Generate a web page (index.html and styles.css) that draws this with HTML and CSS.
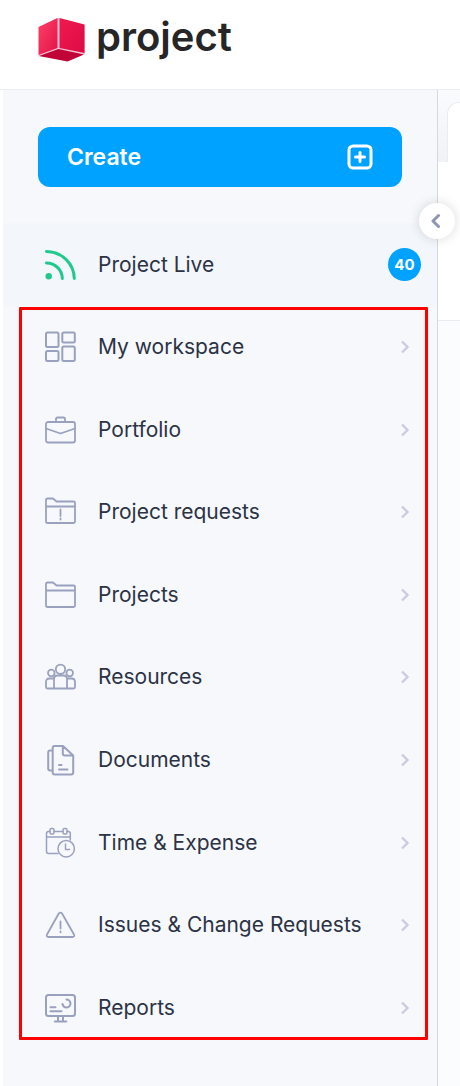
FILE: index.html
```
<!DOCTYPE html>
<html lang="en">
<head>
    <meta charset="UTF-8">
    <meta name="viewport" content="width=device-width, initial-scale=1.0">
    <title>Project</title>
    <link rel="stylesheet" href="styles.css">
</head>
<body>
    <header class="header">
        <a class="logo" href="#">
            <svg class="logo-cube" width="48" height="44" viewBox="0 0 48 44">
                <defs>
                    <linearGradient id="cubeLeft" x1="0" y1="0" x2="1" y2="1">
                        <stop offset="0" stop-color="#ff4166"/>
                        <stop offset="1" stop-color="#e0134a"/>
                    </linearGradient>
                    <linearGradient id="cubeRight" x1="0" y1="0" x2="1" y2="1">
                        <stop offset="0" stop-color="#f01a4e"/>
                        <stop offset="1" stop-color="#dd0a45"/>
                    </linearGradient>
                </defs>
                <path d="M1 9 20 0 47 7V36L30 43 1 38Z" fill="#f3c3d3"/>
                <path d="M0.500 9 19.500 0V30L0.500 37Z" fill="url(#cubeLeft)"/>
                <path d="M21.500 0 46.500 6.500V35L21.500 30Z" fill="url(#cubeRight)"/>
                <path d="M1 38 20.500 31 46 36.500 29.500 43.500Z" fill="#c00438"/>
            </svg>
            <span class="logo-text">project</span>
        </a>
    </header>

    <div class="page">
        <aside class="sidebar">
            <button class="create" type="button">
                <span>Create</span>
                <svg width="26" height="26" viewBox="0 0 26 26" fill="none" stroke="#fff" stroke-width="3" stroke-linecap="round">
                    <rect x="2" y="2" width="22" height="22" rx="4"/>
                    <path d="M13 8.500v9M8.500 13h9"/>
                </svg>
            </button>

            <nav>
                <a class="item live" href="#">
                    <svg class="icon" viewBox="0 0 32 32">
                        <path d="M2.500 2.500A28 27.500 0 0 1 30.300 29.500M2.500 14A16 15.500 0 0 1 18.300 29.500"/>
                        <circle class="dot" cx="4.700" cy="27.300" r="3.200"/>
                    </svg>
                    <span class="label">Project Live</span>
                    <span class="badge">40</span>
                </a>

                <ul class="menu">
                    <li><a class="item" href="#">
                        <svg class="icon bold" viewBox="0 0 32 32"><rect x="2" y="1.500" width="12.500" height="14.500" rx="1.500"/><rect x="18.300" y="1.500" width="12.500" height="10" rx="1.500"/><rect x="2" y="20" width="12.500" height="10" rx="1.500"/><rect x="18.300" y="15.500" width="12.500" height="14.500" rx="1.500"/></svg>
                        <span class="label">My workspace</span>
                        <svg class="arrow" viewBox="0 0 10 14"><path d="M2 1.500 7.500 7 2 12.500"/></svg>
                    </a></li>
                    <li><a class="item" href="#">
                        <svg class="icon" viewBox="0 0 32 32"><rect x="2" y="8" width="29" height="20.500" rx="2"/><path d="M12 8V5q0-1.500 1.500-1.500h6Q21 3.500 21 5v3M2 14.500l14.500 5 14.500-5"/></svg>
                        <span class="label">Portfolio</span>
                        <svg class="arrow" viewBox="0 0 10 14"><path d="M2 1.500 7.500 7 2 12.500"/></svg>
                    </a></li>
                    <li><a class="item" href="#">
                        <svg class="icon" viewBox="0 0 32 32"><path d="M2 25.500V4Q2 2.500 3.500 2.500H9l3.500 3H29.500Q31 5.500 31 7v18.500Q31 27 29.500 27h-26Q2 27 2 25.500ZM2 10.500h29M16.500 13.500v6.500M16.500 22.500v1"/></svg>
                        <span class="label">Project requests</span>
                        <svg class="arrow" viewBox="0 0 10 14"><path d="M2 1.500 7.500 7 2 12.500"/></svg>
                    </a></li>
                    <li><a class="item" href="#">
                        <svg class="icon" viewBox="0 0 32 32"><path d="M2 26.500V5Q2 3.500 3.500 3.500H9l3.500 3H29.500Q31 6.500 31 8v18.500Q31 28 29.500 28h-26Q2 28 2 26.500ZM2 11.500h29"/></svg>
                        <span class="label">Projects</span>
                        <svg class="arrow" viewBox="0 0 10 14"><path d="M2 1.500 7.500 7 2 12.500"/></svg>
                    </a></li>
                    <li><a class="item" href="#">
                        <svg class="icon" viewBox="0 0 32 32"><circle cx="16.500" cy="8.300" r="4.700"/><circle cx="7.300" cy="12" r="3.300"/><circle cx="25.700" cy="12" r="3.300"/><path d="M10 27.500V18q0-3.500 3.500-3.500h6Q23 14.500 23 18v9.500M10 17.500H5.500Q2 17.500 2 21v5q0 1.500 1.500 1.500h26Q31 27.500 31 26v-5q0-3.500-3.500-3.500H23"/></svg>
                        <span class="label">Resources</span>
                        <svg class="arrow" viewBox="0 0 10 14"><path d="M2 1.500 7.500 7 2 12.500"/></svg>
                    </a></li>
                    <li><a class="item" href="#">
                        <svg class="icon bold" viewBox="0 0 32 32"><path d="M19 2h-8.500Q8.700 2 8.700 4v24.500q0 2 2 2h16.500q2 0 2-2V11.500ZM18.800 2v7.500q0 2 2 2h8.400M8.700 6.500H6q-1.800 0-1.800 2V24.500q0 2 1.800 2h2.700M15 21h2.500M15 25.500h8.500"/></svg>
                        <span class="label">Documents</span>
                        <svg class="arrow" viewBox="0 0 10 14"><path d="M2 1.500 7.500 7 2 12.500"/></svg>
                    </a></li>
                    <li><a class="item" href="#">
                        <svg class="icon thin" viewBox="0 0 32 32"><path d="M14 26.500H4.500Q2.500 26.500 2.500 24.500V6.500q0-2 2-2H6M10 4.500h9M23 4.500h1.300q2 0 2 2V13M2.500 10h23.800"/><rect x="6" y="1.500" width="4" height="5.500" rx="1.500"/><rect x="19" y="1.500" width="4" height="5.500" rx="1.500"/><circle cx="22.200" cy="21.700" r="8.200"/><path d="M21.500 17v5.500h4"/></svg>
                        <span class="label">Time &amp; Expense</span>
                        <svg class="arrow" viewBox="0 0 10 14"><path d="M2 1.500 7.500 7 2 12.500"/></svg>
                    </a></li>
                    <li><a class="item" href="#">
                        <svg class="icon" viewBox="0 0 32 32"><path d="M14.600 4.800Q16.400 2.500 18.200 4.800L30 25.500Q31 28 28.500 28h-24Q2 28 3 25.500ZM16.500 12.500v7M16.500 22.500v.8"/></svg>
                        <span class="label">Issues &amp; Change Requests</span>
                        <svg class="arrow" viewBox="0 0 10 14"><path d="M2 1.500 7.500 7 2 12.500"/></svg>
                    </a></li>
                    <li><a class="item" href="#">
                        <svg class="icon bold" viewBox="0 0 32 32"><rect x="2" y="3" width="29" height="21" rx="2.500"/><path d="M6.500 15.200h5M6.500 19.200h11M22.500 7.500a4 4 0 1 1-4 4.500M14 24.500v4.500M19 24.500v4.500M10.800 29.500h11.500"/></svg>
                        <span class="label">Reports</span>
                        <svg class="arrow" viewBox="0 0 10 14"><path d="M2 1.500 7.500 7 2 12.500"/></svg>
                    </a></li>
                </ul>
            </nav>

            <button class="toggle" type="button" aria-label="Collapse menu">
                <svg width="12" height="16" viewBox="0 0 12 16" fill="none" stroke="#8f95b5" stroke-width="3" stroke-linecap="round" stroke-linejoin="round">
                    <path d="M7.500 2.500 2 8l5.500 5.500"/>
                </svg>
            </button>
        </aside>

        <main class="content">
            <div class="tabs"><div class="tab"></div></div>
            <div class="panel"></div>
        </main>
    </div>
</body>
</html>
```
FILE: styles.css
```
* {
    box-sizing: border-box;
}

body {
    margin: 0;
    font-family: Inter, sans-serif;
    color: #2b3345;
    background-color: #fff;
}

a {
    color: inherit;
    text-decoration: none;
}

.header {
    height: 90px;
    padding: 18px 38px;
    border-bottom: 1px solid #ebecef;
}

.logo {
    display: flex;
    align-items: center;
    gap: 10px;
    height: 44px;
}

.logo-text {
    font-size: 40px;
    font-weight: 600;
    line-height: 40px;
    padding-bottom: 6px;
    color: #262626;
}

.page {
    display: flex;
    min-height: calc(100vh - 90px);
    padding-left: 3px;
}

.sidebar {
    position: relative;
    flex: 1;
    padding-top: 37px;
    border-right: 1px solid #d6d8dd;
    background-color: #f7f8fc;
}

.create {
    display: flex;
    align-items: center;
    justify-content: space-between;
    width: calc(100% - 70px);
    height: 60px;
    margin: 0 35px 36px;
    padding: 0 29px;
    border: none;
    border-radius: 12px;
    background-color: #00a2ff;
    color: #fff;
    font-family: inherit;
    font-size: 23px;
    font-weight: 600;
    cursor: pointer;
}

.item {
    display: flex;
    align-items: center;
    gap: 22px;
    height: 100%;
    padding: 0 27px 0 41px;
}

.live {
    height: 83px;
    padding-right: 16px;
    background-color: #f3f6fb;
}

.label {
    flex: 1;
    font-size: 21px;
    line-height: 28px;
    white-space: nowrap;
}

.icon {
    width: 32px;
    height: 32px;
    fill: none;
    stroke: #9aa1bf;
    stroke-width: 1.8;
    stroke-linecap: round;
    stroke-linejoin: round;
}

.thin {
    stroke-width: 1.5;
}

.bold {
    stroke-width: 2;
}

.live .icon {
    stroke: #20ca8c;
    stroke-width: 3;
}

.live .dot {
    fill: #20ca8c;
    stroke: none;
}

.arrow {
    width: 10px;
    height: 14px;
    fill: none;
    stroke: #c9cce0;
    stroke-width: 2.4;
}

.badge {
    width: 33px;
    height: 33px;
    border-radius: 50%;
    background-color: #00a2ff;
    color: #fff;
    font-size: 15px;
    font-weight: 700;
    line-height: 33px;
    text-align: center;
}

.menu {
    position: relative;
    display: grid;
    grid-auto-rows: 1fr;
    min-height: 743px;
    margin: 0;
    padding: 0;
    list-style: none;
}

/* red frame around the menu sections */
.menu::after {
    content: "";
    position: absolute;
    top: 1px;
    right: 9px;
    bottom: 9px;
    left: 16px;
    border: 3px solid #f00;
    border-radius: 1px;
    pointer-events: none;
}

.toggle {
    position: absolute;
    top: 113px;
    right: -18px;
    display: flex;
    align-items: center;
    justify-content: center;
    width: 36px;
    height: 36px;
    padding: 0;
    border: none;
    border-radius: 50%;
    background-color: #fff;
    box-shadow: 0 0 12px rgba(0, 0, 0, 0.15);
    cursor: pointer;
}

.content {
    width: 22px;
    background-color: #fbfcfe;
}

.tabs {
    height: 72px;
    padding: 12px 0 0 9px;
    background: linear-gradient(#fafbfd, #f1f2f7);
}

.tab {
    height: 60px;
    border: 1px solid #ebecf1;
    border-width: 1px 0 0 1px;
    border-radius: 12px 0 0 0;
    background-color: #fff;
}

.panel {
    height: 159px;
    border-bottom: 1px solid #ebecf1;
    background-color: #fff;
}
```
